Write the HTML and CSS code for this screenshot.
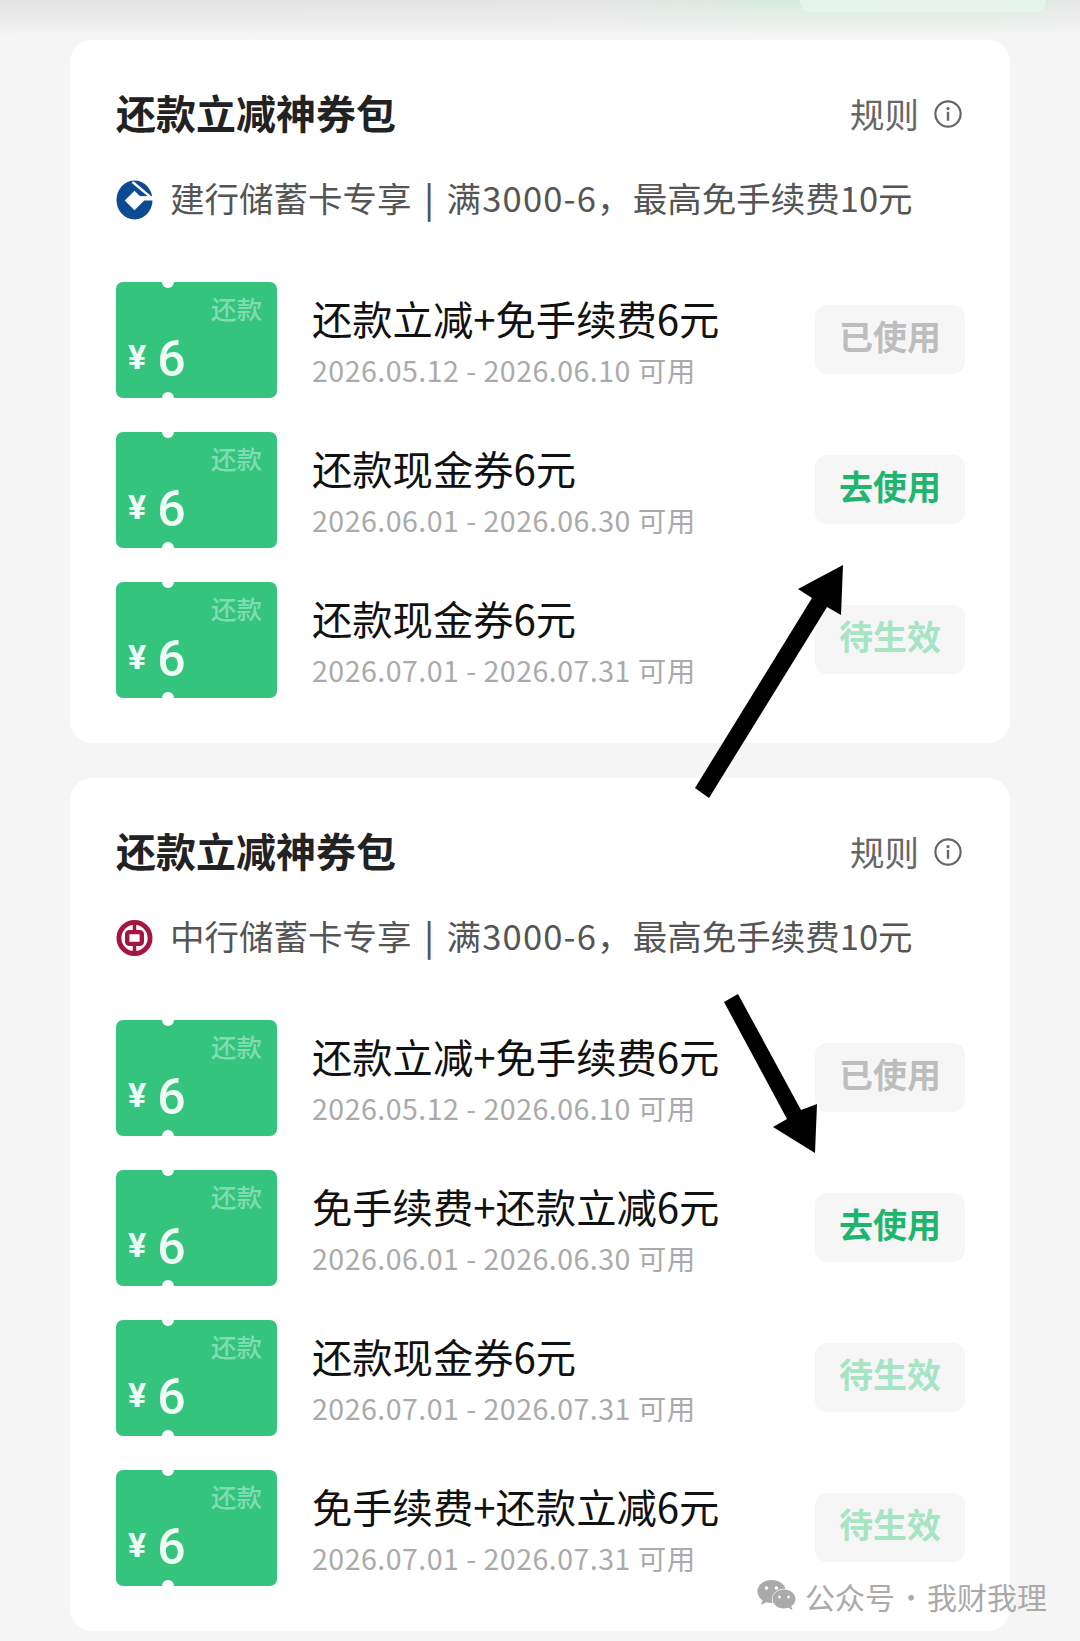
FILE: index.html
```html
<!DOCTYPE html>
<html lang="zh-CN">
<head>
<meta charset="utf-8">
<title>还款立减神券包</title>
<link rel="stylesheet" href="styles.css">
</head>
<body>
<div class="page">
  <div class="topbar"><div class="pill"></div></div>

  <section class="card">
    <header class="head">
      <h2 class="title">还款立减神券包</h2>
      <div class="rules">规则
        <svg class="info" viewBox="0 0 28 28"><circle cx="14" cy="14" r="12.6" fill="none" stroke="#666" stroke-width="2.2"/><circle cx="14" cy="8.6" r="1.6" fill="#666"/><rect x="12.8" y="11.8" width="2.4" height="9" fill="#666"/></svg>
      </div>
    </header>
    <div class="sub">
      <svg class="logo" viewBox="0 0 38 40"><ellipse cx="19" cy="20" rx="18.5" ry="20" fill="#0d4a94"/><path d="M19 10.500 29 20.500 19 30.500 9 20.500Z" fill="#fff"/><path d="M24 16H38V20.500H24Z" fill="#fff"/><path d="M17 1.500 35 16.500" stroke="#fff" stroke-width="2.500" fill="none"/></svg>
      <div class="sub-text"><span>建行储蓄卡专享</span><span class="sep">|</span><span class="nums">满3000-6，</span><span>最高免手续费10元</span></div>
    </div>
    <ul class="list">
      <li class="row">
        <div class="coupon"><span class="tag">还款</span><div class="amount"><span class="yen">¥</span><span class="num">6</span></div></div>
        <div class="info-col"><div class="name">还款立减+免手续费6元</div><div class="date">2026.05.12 - 2026.06.10 可用</div></div>
        <div class="btn used">已使用</div>
      </li>
      <li class="row">
        <div class="coupon"><span class="tag">还款</span><div class="amount"><span class="yen">¥</span><span class="num">6</span></div></div>
        <div class="info-col"><div class="name">还款现金券6元</div><div class="date">2026.06.01 - 2026.06.30 可用</div></div>
        <div class="btn go">去使用</div>
      </li>
      <li class="row">
        <div class="coupon"><span class="tag">还款</span><div class="amount"><span class="yen">¥</span><span class="num">6</span></div></div>
        <div class="info-col"><div class="name">还款现金券6元</div><div class="date">2026.07.01 - 2026.07.31 可用</div></div>
        <div class="btn wait">待生效</div>
      </li>
    </ul>
  </section>

  <section class="card">
    <header class="head">
      <h2 class="title">还款立减神券包</h2>
      <div class="rules">规则
        <svg class="info" viewBox="0 0 28 28"><circle cx="14" cy="14" r="12.6" fill="none" stroke="#666" stroke-width="2.2"/><circle cx="14" cy="8.6" r="1.6" fill="#666"/><rect x="12.8" y="11.8" width="2.4" height="9" fill="#666"/></svg>
      </div>
    </header>
    <div class="sub">
      <svg class="logo" viewBox="0 0 38 40"><circle cx="19" cy="20" r="16" fill="none" stroke="#a5153f" stroke-width="5"/><rect x="11.500" y="14" width="15" height="12" rx="2" fill="none" stroke="#a5153f" stroke-width="4.500"/><path d="M19 4V14M19 26V36" stroke="#a5153f" stroke-width="3.500"/></svg>
      <div class="sub-text"><span>中行储蓄卡专享</span><span class="sep">|</span><span class="nums">满3000-6，</span><span>最高免手续费10元</span></div>
    </div>
    <ul class="list">
      <li class="row">
        <div class="coupon"><span class="tag">还款</span><div class="amount"><span class="yen">¥</span><span class="num">6</span></div></div>
        <div class="info-col"><div class="name">还款立减+免手续费6元</div><div class="date">2026.05.12 - 2026.06.10 可用</div></div>
        <div class="btn used">已使用</div>
      </li>
      <li class="row">
        <div class="coupon"><span class="tag">还款</span><div class="amount"><span class="yen">¥</span><span class="num">6</span></div></div>
        <div class="info-col"><div class="name">免手续费+还款立减6元</div><div class="date">2026.06.01 - 2026.06.30 可用</div></div>
        <div class="btn go">去使用</div>
      </li>
      <li class="row">
        <div class="coupon"><span class="tag">还款</span><div class="amount"><span class="yen">¥</span><span class="num">6</span></div></div>
        <div class="info-col"><div class="name">还款现金券6元</div><div class="date">2026.07.01 - 2026.07.31 可用</div></div>
        <div class="btn wait">待生效</div>
      </li>
      <li class="row">
        <div class="coupon"><span class="tag">还款</span><div class="amount"><span class="yen">¥</span><span class="num">6</span></div></div>
        <div class="info-col"><div class="name">免手续费+还款立减6元</div><div class="date">2026.07.01 - 2026.07.31 可用</div></div>
        <div class="btn wait">待生效</div>
      </li>
    </ul>
  </section>

  <svg class="arrows" viewBox="0 0 1080 1641">
    <path d="M695 788 812 598 798 589 843 565 841 615 827 607 709 798Z"/>
    <path d="M724 1002 738 994 801 1110 817 1104 815 1153 773 1127 787 1119Z"/>
  </svg>

  <div class="mark">
    <svg class="wechat" viewBox="0 0 40 34">
      <path d="M15 1C7 1 1 6 1 12.500c0 3.700 2 6.800 5 9l-1.500 4.500 5.300-2.800c1.700.5 3.500.8 5.200.8h1c-.4-1.200-.6-2.300-.6-3.500 0-6 5.700-10.700 12.600-10.700h1C27.800 4.500 22 1 15 1Z" fill="#aaa"/>
      <path d="M39 20c0-5.300-5.200-9.500-11.500-9.500S16 14.700 16 20s5.200 9.500 11.500 9.500c1.500 0 2.900-.2 4.200-.7l4.300 2.300-1.200-3.800c2.600-1.800 4.200-4.500 4.200-7.300Z" fill="#aaa"/>
      <circle cx="10" cy="9" r="1.800" fill="#fff"/><circle cx="20" cy="9" r="1.800" fill="#fff"/>
      <circle cx="23" cy="18" r="1.500" fill="#fff"/><circle cx="32" cy="18" r="1.500" fill="#fff"/>
    </svg>
    <span>公众号</span><span class="dot">·</span><span>我财我理</span>
  </div>
</div>
</body>
</html>
```

FILE: styles.css
```css
* { box-sizing: border-box; margin: 0; padding: 0; }
html, body { background: #f5f5f5; }
body {
  font-family: "Noto Sans CJK SC", "Noto Sans", sans-serif;
  width: 1080px;
  height: 1641px;
  overflow: hidden;
}
.page { position: relative; width: 1080px; height: 1641px; display: flex; flex-direction: column; gap: 35px; }
.topbar {
  height: 5px;
  flex: none;
  position: relative;
}
.topbar::before {
  content: "";
  position: absolute;
  left: 0; right: 0; top: 0;
  height: 36px;
  background:
    linear-gradient(to bottom, rgba(245,245,245,0) 0, rgba(245,245,245,.4) 16px, #f5f5f5 36px),
    linear-gradient(to right, #e2e2e2 0, #e4e4e4 55%, #d6ebde 72%, #d8ebdf 92%, #e6e6e6 100%);
}
.pill {
  position: absolute;
  left: 800px; top: -10px;
  width: 246px; height: 22px;
  background: #e6f5ec;
  border-radius: 16px;
}
.card {
  width: 940px;
  margin-left: 70px;
  background: #fff;
  border-radius: 22px;
  padding: 0 45px 45px 46px;
  position: relative;
  flex: none;
}
.head { height: 148px; padding-top: 46px; display: flex; justify-content: space-between; align-items: flex-start; }
.title { font-size: 40px; line-height: 52px; font-weight: 700; color: #222; }
.rules { display: flex; align-items: center; gap: 15px; padding: 1px 3px 0 0; font-size: 34.500px; line-height: 52px; color: #666; }
.info { width: 28px; height: 28px; margin-top: 2px; }
.sub { display: flex; align-items: center; height: 50px; margin-top: -16px; gap: 17px; font-size: 34.500px; color: #555; white-space: nowrap; }
.sub-text { display: flex; }
.sep { width: 35px; text-align: center; font-weight: 500; }
.nums { letter-spacing: 1.200px; }
.logo { width: 37px; height: 40px; flex: none; margin-top: 6px; }
.list { list-style: none; display: flex; flex-direction: column; gap: 34px; margin-top: 60px; }
.row { display: flex; align-items: center; height: 116px; }
.coupon {
  position: relative;
  width: 161px;
  height: 116px;
  flex: none;
  background: #34c47e;
  border-radius: 7px;
  padding: 10px 15px 0 12px;
  display: flex;
  flex-direction: column;
  justify-content: space-between;
  overflow: hidden;
}
.coupon::before, .coupon::after {
  content: "";
  position: absolute;
  left: 46px;
  width: 12px; height: 12px;
  border-radius: 50%;
  background: #fff;
}
.coupon::before { top: -6px; }
.coupon::after { bottom: -6px; }
.tag { align-self: flex-end; font-size: 25.500px; font-weight: 500; line-height: 32px; color: #80dcb0; }
.amount { display: flex; align-items: flex-start; gap: 11px; height: 68px; }
.yen { font-family: Roboto, sans-serif; font-size: 34px; font-weight: 700; line-height: 46px; margin-top: 4px; color: #effcf5; }
.num { font-family: Roboto, sans-serif; font-size: 50px; font-weight: 500; line-height: 58px; color: #effcf5; }
.info-col { flex: 1; padding-left: 35px; }
.name { font-size: 40.300px; line-height: 50px; color: #111; white-space: nowrap; }
.date { font-size: 28.500px; letter-spacing: .5px; line-height: 36px; margin-top: 9px; color: #aaa; white-space: nowrap; }
.btn {
  width: 150px;
  height: 69px;
  flex: none;
  margin-bottom: 2px;
  padding-bottom: 7px;
  border-radius: 12px;
  background: #f6f6f6;
  display: flex;
  align-items: center;
  justify-content: center;
  font-size: 34px;
  font-weight: 700;
}
.used { color: #bdbdbd; }
.go { color: #1fb56f; }
.wait { color: #a6e4c4; }
.arrows { position: absolute; left: 0; top: 0; width: 1080px; height: 1641px; fill: #000; pointer-events: none; }
.mark {
  position: absolute;
  left: 756px;
  top: 1574px;
  display: flex;
  align-items: center;
  height: 44px;
  font-size: 30px;
  color: #aaa;
  white-space: nowrap;
}
.wechat { width: 41px; height: 34px; margin-right: 8px; }
.dot { width: 32px; text-align: center; font-weight: 300; }
```
